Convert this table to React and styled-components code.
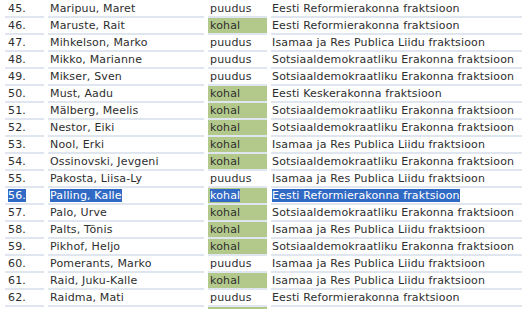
import React from "react";
import styled, { createGlobalStyle } from "styled-components";

const rows = [
  ["45.", "Maripuu, Maret", "puudus", "Eesti Reformierakonna fraktsioon"],
  ["46.", "Maruste, Rait", "kohal", "Eesti Reformierakonna fraktsioon"],
  ["47.", "Mihkelson, Marko", "puudus", "Isamaa ja Res Publica Liidu fraktsioon"],
  ["48.", "Mikko, Marianne", "puudus", "Sotsiaaldemokraatliku Erakonna fraktsioon"],
  ["49.", "Mikser, Sven", "puudus", "Sotsiaaldemokraatliku Erakonna fraktsioon"],
  ["50.", "Must, Aadu", "kohal", "Eesti Keskerakonna fraktsioon"],
  ["51.", "Mälberg, Meelis", "kohal", "Sotsiaaldemokraatliku Erakonna fraktsioon"],
  ["52.", "Nestor, Eiki", "kohal", "Sotsiaaldemokraatliku Erakonna fraktsioon"],
  ["53.", "Nool, Erki", "kohal", "Isamaa ja Res Publica Liidu fraktsioon"],
  ["54.", "Ossinovski, Jevgeni", "kohal", "Sotsiaaldemokraatliku Erakonna fraktsioon"],
  ["55.", "Pakosta, Liisa-Ly", "puudus", "Isamaa ja Res Publica Liidu fraktsioon"],
  ["56.", "Palling, Kalle", "kohal", "Eesti Reformierakonna fraktsioon"],
  ["57.", "Palo, Urve", "kohal", "Sotsiaaldemokraatliku Erakonna fraktsioon"],
  ["58.", "Palts, Tõnis", "kohal", "Isamaa ja Res Publica Liidu fraktsioon"],
  ["59.", "Pikhof, Heljo", "kohal", "Sotsiaaldemokraatliku Erakonna fraktsioon"],
  ["60.", "Pomerants, Marko", "puudus", "Isamaa ja Res Publica Liidu fraktsioon"],
  ["61.", "Raid, Juku-Kalle", "kohal", "Isamaa ja Res Publica Liidu fraktsioon"],
  ["62.", "Raidma, Mati", "puudus", "Eesti Reformierakonna fraktsioon"],
];

const SELECTED = "56.";

const Global = createGlobalStyle`
  html, body {
    margin: 0;
    padding: 0;
    background: #ffffff;
    overflow: hidden;
  }
`;

const Frame = styled.div`
  width: 522px;
  height: 309px;
  overflow: hidden;
`;

const Table = styled.table`
  width: 525px;
  table-layout: fixed;
  margin: 1px 0 0 1px;
  border-collapse: separate;
  border-spacing: 4px 0;
  font-family: "DejaVu Sans", Verdana, sans-serif;
  font-size: 11px;
  letter-spacing: 0.15px;
  color: #2e2e2e;
  white-space: nowrap;
`;

const Cell = styled.td`
  height: 14px;
  line-height: 14px;
  padding: 1px 2px 0;
  border-bottom: 2px solid #dfe6f0;
  vertical-align: middle;
  overflow: hidden;
  background: ${(p) => (p.$present ? "#b3c98b" : "transparent")};
`;

const NumCell = styled(Cell)`
  width: 34px;
  padding-left: 3px;
`;

const NameCell = styled(Cell)`
  width: 152px;
`;

const StatusCell = styled(Cell)`
  width: 55px;
`;

const PartyCell = styled(Cell)`
  padding-left: 1px;
`;

const Sel = styled.span`
  background: ${(p) => (p.$on ? "#316ac5" : "transparent")};
  color: ${(p) => (p.$on ? "#ffffff" : "inherit")};
`;

const App = () => {
  return (
    <Frame>
      <Global />
      <Table>
        <tbody>
          {rows.map(([num, name, status, party]) => {
            const on = num === SELECTED;
            return (
              <tr key={num}>
                <NumCell>
                  <Sel $on={on}>{num}</Sel>
                </NumCell>
                <NameCell>
                  <Sel $on={on}>{name}</Sel>
                </NameCell>
                <StatusCell $present={status === "kohal"}>
                  <Sel $on={on}>{status}</Sel>
                </StatusCell>
                <PartyCell>
                  <Sel $on={on}>{party}</Sel>
                </PartyCell>
              </tr>
            );
          })}
          <tr>
            <NumCell />
            <NameCell />
            <StatusCell $present />
            <PartyCell />
          </tr>
        </tbody>
      </Table>
    </Frame>
  );
};

export default App;
